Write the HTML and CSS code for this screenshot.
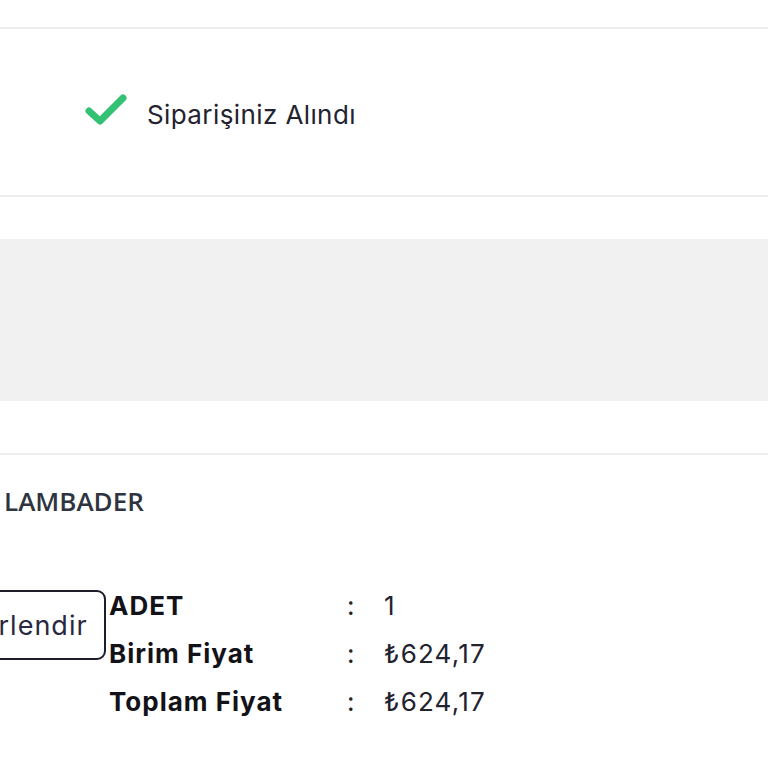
FILE: index.html
```html
<!DOCTYPE html>
<html lang="tr">
<head>
<meta charset="utf-8">
<link rel="stylesheet" href="styles.css">
</head>
<body>
<div class="top"></div>
<section class="status">
  <svg class="check" width="42" height="32" viewBox="0 0 42 32" aria-hidden="true">
    <path d="M4 17 L15 27 L38 4" fill="none" stroke="#33c173" stroke-width="7" stroke-linecap="round" stroke-linejoin="round"/>
  </svg>
  <span class="status-text">Siparişiniz Alındı</span>
</section>
<div class="spacer"></div>
<div class="banner"></div>
<div class="spacer2"></div>
<section class="product">
  <h2 class="name">LAMBADER</h2>
  <div class="details">
    <button class="rate">Değerlendir</button>
    <div class="table">
      <div class="row"><span class="label">ADET</span><span class="colon">:</span><span class="val">1</span></div>
      <div class="row"><span class="label">Birim Fiyat</span><span class="colon">:</span><span class="val">₺624,17</span></div>
      <div class="row"><span class="label">Toplam Fiyat</span><span class="colon">:</span><span class="val">₺624,17</span></div>
    </div>
  </div>
</section>
</body>
</html>
```
FILE: styles.css
```css
html, body { margin: 0; padding: 0; background: #fff; overflow: hidden; }
body { font-family: "Inter", "Open Sans", sans-serif; color: #1d1d2b; width: 768px; height: 768px; }
.top { height: 27px; border-bottom: 2px solid #ececec; }
.status {
  height: 166px;
  display: flex;
  align-items: center;
  padding-left: 85px;
  border-bottom: 2px solid #ececec;
}
.check { margin-top: -4px; margin-right: 20px; flex: none; }
.status-text {
  font-size: 26px;
  font-weight: 400;
  letter-spacing: 0.4px;
  color: #23222f;
  margin-top: 4px;
}
.spacer { height: 42px; }
.banner { height: 162px; background: #f1f1f1; }
.spacer2 { height: 52px; border-bottom: 2px solid #eeeeee; }
.product { padding-top: 29px; }
.name {
  margin: 0 0 0 4px;
  font-family: "Open Sans", sans-serif;
  font-size: 26px;
  font-weight: 600;
  color: #2e3440;
  line-height: 34px;
}
.details { display: flex; align-items: flex-start; margin-top: 72px; }
.rate {
  margin-left: -75px;
  width: 181px;
  height: 70px;
  border: 2px solid #1d1d2b;
  border-radius: 9px;
  background: #fff;
  font-family: "Inter", sans-serif;
  font-size: 27px;
  letter-spacing: 1px;
  color: #2a2840;
  padding: 0 23px 0 0;
  text-align: right;
  white-space: nowrap;
  flex: none;
}
.table { margin-left: 3px; margin-top: 1px; display: flex; flex-direction: column; }
.row { display: flex; height: 48px; align-items: flex-start; }
.label {
  width: 238px;
  font-size: 26px;
  font-weight: 700;
  letter-spacing: 1px;
  color: #121218;
  line-height: 30px;
  white-space: nowrap;
}
.colon { width: 37px; font-size: 26px; color: #222; line-height: 30px; }
.val { font-size: 26px; letter-spacing: 1.2px; color: #23222f; line-height: 30px; white-space: nowrap; }
```
